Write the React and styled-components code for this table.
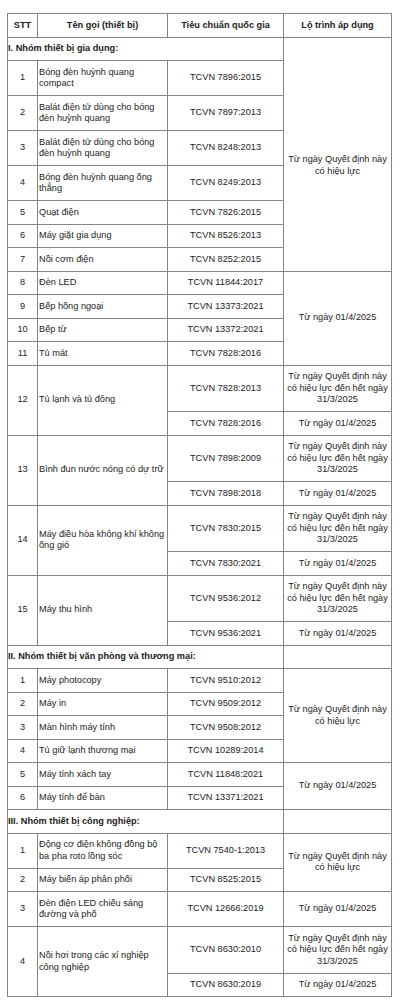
import React from 'react';
import styled, { createGlobalStyle } from 'styled-components';

const GlobalStyle = createGlobalStyle`
  html, body {
    margin: 0;
    padding: 0;
    background: #ffffff;
  }
  body {
    font-family: "Liberation Sans", Arial, sans-serif;
    color: #222222;
  }
`;

const QD = 'Từ ngày Quyết định này có hiệu lực';
const QD_END = 'Từ ngày Quyết định này có hiệu lực đến hết ngày 31/3/2025';
const APR = 'Từ ngày 01/4/2025';

const sections = [
  {
    title: 'I. Nhóm thiết bị gia dụng:',
    joined: true,
    items: [
      { stt: 1, name: 'Bóng đèn huỳnh quang compact', entries: [{ std: 'TCVN 7896:2015', date: QD, span: 7 }] },
      { stt: 2, name: 'Balát điện tử dùng cho bóng đèn huỳnh quang', entries: [{ std: 'TCVN 7897:2013' }] },
      { stt: 3, name: 'Balát điện tử dùng cho bóng đèn huỳnh quang', entries: [{ std: 'TCVN 8248:2013' }] },
      { stt: 4, name: 'Bóng đèn huỳnh quang ống thẳng', entries: [{ std: 'TCVN 8249:2013' }] },
      { stt: 5, name: 'Quạt điện', entries: [{ std: 'TCVN 7826:2015' }] },
      { stt: 6, name: 'Máy giặt gia dụng', entries: [{ std: 'TCVN 8526:2013' }] },
      { stt: 7, name: 'Nồi cơm điện', entries: [{ std: 'TCVN 8252:2015' }] },
      { stt: 8, name: 'Đèn LED', entries: [{ std: 'TCVN 11844:2017', date: APR, span: 4 }] },
      { stt: 9, name: 'Bếp hồng ngoại', entries: [{ std: 'TCVN 13373:2021' }] },
      { stt: 10, name: 'Bếp từ', entries: [{ std: 'TCVN 13372:2021' }] },
      { stt: 11, name: 'Tủ mát', entries: [{ std: 'TCVN 7828:2016' }] },
      {
        stt: 12,
        name: 'Tủ lạnh và tủ đông',
        entries: [
          { std: 'TCVN 7828:2013', date: QD_END },
          { std: 'TCVN 7828:2016', date: APR },
        ],
      },
      {
        stt: 13,
        name: 'Bình đun nước nóng có dự trữ',
        entries: [
          { std: 'TCVN 7898:2009', date: QD_END },
          { std: 'TCVN 7898:2018', date: APR },
        ],
      },
      {
        stt: 14,
        name: 'Máy điều hòa không khí không ống gió',
        entries: [
          { std: 'TCVN 7830:2015', date: QD_END },
          { std: 'TCVN 7830:2021', date: APR },
        ],
      },
      {
        stt: 15,
        name: 'Máy thu hình',
        entries: [
          { std: 'TCVN 9536:2012', date: QD_END },
          { std: 'TCVN 9536:2021', date: APR },
        ],
      },
    ],
  },
  {
    title: 'II. Nhóm thiết bị văn phòng và thương mại:',
    items: [
      { stt: 1, name: 'Máy photocopy', entries: [{ std: 'TCVN 9510:2012', date: QD, span: 4 }] },
      { stt: 2, name: 'Máy in', entries: [{ std: 'TCVN 9509:2012' }] },
      { stt: 3, name: 'Màn hình máy tính', entries: [{ std: 'TCVN 9508:2012' }] },
      { stt: 4, name: 'Tủ giữ lạnh thương mại', entries: [{ std: 'TCVN 10289:2014' }] },
      { stt: 5, name: 'Máy tính xách tay', entries: [{ std: 'TCVN 11848:2021', date: APR, span: 2 }] },
      { stt: 6, name: 'Máy tính để bàn', entries: [{ std: 'TCVN 13371:2021' }] },
    ],
  },
  {
    title: 'III. Nhóm thiết bị công nghiệp:',
    items: [
      { stt: 1, name: 'Động cơ điện không đồng bộ ba pha roto lồng sóc', entries: [{ std: 'TCVN 7540-1:2013', date: QD, span: 2 }] },
      { stt: 2, name: 'Máy biến áp phân phối', entries: [{ std: 'TCVN 8525:2015' }] },
      { stt: 3, name: 'Đèn điện LED chiếu sáng đường và phố', entries: [{ std: 'TCVN 12666:2019', date: APR }] },
      {
        stt: 4,
        name: 'Nồi hơi trong các xí nghiệp công nghiệp',
        entries: [
          { std: 'TCVN 8630:2010', date: QD_END },
          { std: 'TCVN 8630:2019', date: APR },
        ],
      },
    ],
  },
];

export default function App() {
  return (
    <>
      <GlobalStyle />
      <Page>
        <Table>
          <colgroup>
            <col style={{ width: 30 }} />
            <col style={{ width: 130 }} />
            <col style={{ width: 116 }} />
            <col style={{ width: 108 }} />
          </colgroup>
          <thead>
            <tr>
              <HeadCell>STT</HeadCell>
              <HeadCell>Tên gọi (thiết bị)</HeadCell>
              <HeadCell>Tiêu chuẩn quốc gia</HeadCell>
              <HeadCell>Lộ trình áp dụng</HeadCell>
            </tr>
          </thead>
          <tbody>
            {sections.map((section) => (
              <React.Fragment key={section.title}>
                <tr>
                  <SectionCell colSpan={3}>{section.title}</SectionCell>
                  <DateCell $openBottom={section.joined} />
                </tr>
                {section.items.map((item, itemIndex) =>
                  item.entries.map((entry, i) => (
                    <tr key={`${item.stt}-${i}`}>
                      {i === 0 && (
                        <>
                          <NumberCell rowSpan={item.entries.length}>{item.stt}</NumberCell>
                          <NameCell rowSpan={item.entries.length}>{item.name}</NameCell>
                        </>
                      )}
                      <StandardCell>{entry.std}</StandardCell>
                      {entry.date && (
                        <DateCell
                          rowSpan={entry.span || 1}
                          $openTop={section.joined && itemIndex === 0}
                        >
                          {entry.date}
                        </DateCell>
                      )}
                    </tr>
                  ))
                )}
              </React.Fragment>
            ))}
          </tbody>
        </Table>
      </Page>
    </>
  );
}

const Page = styled.div`
  padding: 13px 0 0 7px;
`;

const Table = styled.table`
  width: 384px;
  table-layout: fixed;
  border-collapse: collapse;
  font-size: 9.2px;
  line-height: 11.5px;
  color: #222222;
`;

const Cell = styled.td`
  border: 1px solid #858585;
  padding: 5.5px 1px;
  vertical-align: middle;
`;

const HeadCell = styled(Cell).attrs({ as: 'th' })`
  font-weight: bold;
  text-align: center;
`;

const SectionCell = styled(Cell)`
  font-weight: bold;
  text-align: left;
  padding-left: 0;
`;

const NumberCell = styled(Cell)`
  text-align: center;
`;

const NameCell = styled(Cell)`
  text-align: left;
`;

const StandardCell = styled(Cell)`
  text-align: center;
`;

const DateCell = styled(Cell)`
  text-align: center;
  ${(p) => p.$openBottom && 'border-bottom: none;'}
  ${(p) => p.$openTop && 'border-top: none;'}
`;
